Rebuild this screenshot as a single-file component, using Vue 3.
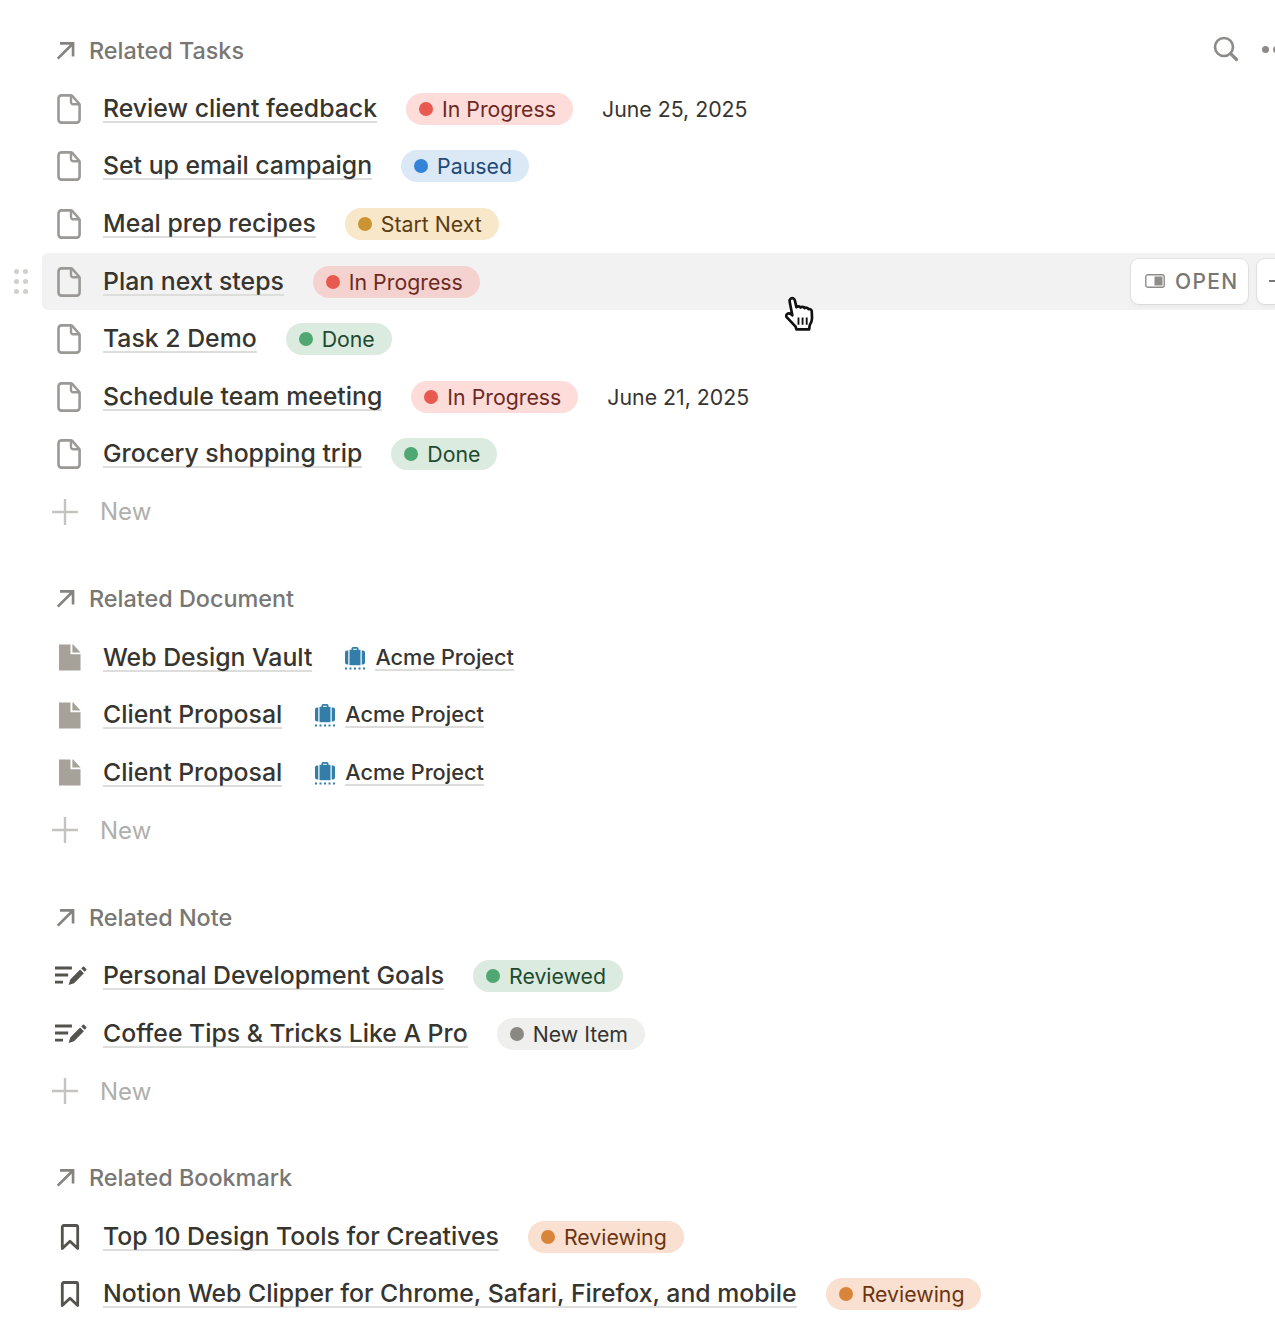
<script setup>
const sections = [
  { title: 'Related Tasks', tools: true, hasNew: true, rows: [
    { icon: 'page', name: 'Review client feedback', pill: ['In Progress', 'red'], date: 'June 25, 2025' },
    { icon: 'page', name: 'Set up email campaign', pill: ['Paused', 'blue'] },
    { icon: 'page', name: 'Meal prep recipes', pill: ['Start Next', 'yellow'] },
    { icon: 'page', name: 'Plan next steps', pill: ['In Progress', 'red'], hover: true },
    { icon: 'page', name: 'Task 2 Demo', pill: ['Done', 'green'] },
    { icon: 'page', name: 'Schedule team meeting', pill: ['In Progress', 'red'], date: 'June 21, 2025' },
    { icon: 'page', name: 'Grocery shopping trip', pill: ['Done', 'green'] },
  ] },
  { title: 'Related Document', hasNew: true, rows: [
    { icon: 'doc', name: 'Web Design Vault', project: 'Acme Project' },
    { icon: 'doc', name: 'Client Proposal', project: 'Acme Project' },
    { icon: 'doc', name: 'Client Proposal', project: 'Acme Project' },
  ] },
  { title: 'Related Note', hasNew: true, rows: [
    { icon: 'note', name: 'Personal Development Goals', pill: ['Reviewed', 'green'] },
    { icon: 'note', name: 'Coffee Tips & Tricks Like A Pro', pill: ['New Item', 'gray'] },
  ] },
  { title: 'Related Bookmark', rows: [
    { icon: 'mark', name: 'Top 10 Design Tools for Creatives', pill: ['Reviewing', 'orange'] },
    { icon: 'mark', name: 'Notion Web Clipper for Chrome, Safari, Firefox, and mobile', pill: ['Reviewing', 'orange'] },
  ] },
]
</script>

<template>
  <div class="page">
    <section v-for="s in sections" :key="s.title" class="section">
      <header class="head">
        <svg class="arrow" viewBox="0 0 20 20" width="21" height="21">
          <path d="M2.600 17.800 16.400 4M4.800 3.200H17.200V15.600" fill="none" stroke="#85837f" stroke-width="2.500" />
        </svg>
        <span class="head-title">{{ s.title }}</span>
        <div v-if="s.tools" class="tools">
          <svg viewBox="0 0 26 26" width="26" height="26">
            <circle cx="11" cy="11" r="9" fill="none" stroke="#8c8b88" stroke-width="2.600" />
            <path d="M17.600 17.600 23.500 23.500" stroke="#8c8b88" stroke-width="3.200" stroke-linecap="round" />
          </svg>
          <div class="dots"><i></i><i></i><i></i></div>
        </div>
      </header>

      <div v-for="(r, i) in s.rows" :key="i" class="row" :class="{ hover: r.hover }">
        <div v-if="r.hover" class="grip"><i v-for="n in 6" :key="n"></i></div>
        <div class="icon">
          <svg v-if="r.icon === 'page'" viewBox="0 0 24 30" width="24" height="30">
            <path d="M4.500 1.400h9.200a2 2 0 0 1 1.500.6l6.800 7.500a2.300 2.300 0 0 1 .6 1.500v14.600a3 3 0 0 1-3 3H4.500a3 3 0 0 1-3-3V4.400a3 3 0 0 1 3-3Z" fill="none" stroke="#9a9996" stroke-width="2.600" />
            <path d="M14 1.800V8a2.200 2.200 0 0 0 2.200 2.200h6" fill="none" stroke="#9a9996" stroke-width="2.400" />
          </svg>
          <svg v-else-if="r.icon === 'doc'" class="doc" viewBox="0 0 23 27" width="22" height="27">
            <path d="M0 0h12v10h10.500v17H0Z" fill="#a6a299" />
            <path d="M14 0h.8l7.700 8.300H14Z" fill="#a6a299" />
          </svg>
          <svg v-else-if="r.icon === 'note'" viewBox="0 0 34 22" width="32" height="21" class="note">
            <path d="M0 1.500h18v3H0ZM0 9h14v3H0ZM0 16.500h8.500v3H0Z" fill="#55534e" />
            <path d="M14.500 21l1.700-5.800L26.700 4.700l4 4-10.500 10.500ZM27.900 3.500l1.700-1.700a1 1 0 0 1 1.400 0l2.200 2.200a1 1 0 0 1 0 1.400l-1.700 1.700Z" fill="#55534e" />
          </svg>
          <svg v-else viewBox="0 0 20 26" width="20" height="26" class="mark">
            <path d="M3.800 1.500h12.400a1.500 1.500 0 0 1 1.500 1.500v21.500L10 17.200 2.300 24.500V3a1.500 1.500 0 0 1 1.500-1.500Z" fill="none" stroke="#55534e" stroke-width="2.800" stroke-linejoin="round" />
          </svg>
        </div>
        <span class="name">{{ r.name }}</span>
        <span v-if="r.pill" class="pill" :class="r.pill[1]"><i></i>{{ r.pill[0] }}</span>
        <span v-if="r.date" class="date">{{ r.date }}</span>
        <span v-if="r.project" class="project">
          <svg viewBox="0 0 22 24" width="22" height="24">
            <path d="M7.500 4V2.600A1.600 1.600 0 0 1 9.100 1h3.800a1.600 1.600 0 0 1 1.600 1.600V4h-1.700V2.800H9.200V4Z" fill="#337ea9" />
            <path d="M5.500 3.800h11v15.400h-11Z" fill="#337ea9" />
            <path d="M4.300 4.600v13.800H3A2 2 0 0 1 1 16.400V6.600a2 2 0 0 1 2-2ZM17.700 4.600H19a2 2 0 0 1 2 2v9.800a2 2 0 0 1-2 2h-1.300Z" fill="#337ea9" />
            <path d="M1 22.500h20" stroke="#337ea9" stroke-width="2" stroke-dasharray="2 2.500" />
          </svg>
          <span class="project-name">{{ r.project }}</span>
        </span>
        <div v-if="r.hover" class="actions">
          <div class="btn open">
            <svg viewBox="0 0 20 14" width="20" height="14">
              <rect x=".8" y=".8" width="18.400" height="12.400" rx="2" fill="none" stroke="#8e8d8a" stroke-width="1.400" />
              <rect x="9.500" y="2.500" width="8" height="9" fill="#8e8d8a" />
            </svg>
            OPEN
          </div>
          <div class="btn more">
            <svg viewBox="0 0 14 14" width="14" height="14"><path d="M0 7h14M7 0v14" stroke="#777" stroke-width="2" /></svg>
          </div>
        </div>
      </div>

      <div v-if="s.hasNew" class="new">
        <svg viewBox="0 0 26 26" width="26" height="26">
          <path d="M0 13h26M13 0v26" stroke="#c4c3c0" stroke-width="2.400" />
        </svg>
        <span>New</span>
      </div>
    </section>

    <svg class="cursor" viewBox="0 0 32 36" width="33" height="37">
      <path d="M7.500 2.500c1.800-1.200 3.600 0 4 1.800l1.500 6.500c1.500-1.200 3-1 4 .4 1.400-1 3-.8 3.900.6 1.400-.8 3-.4 3.800 1 1.500-.5 3 .3 3.200 2l.3 6.700c0 3-.8 5-2.300 7l-.5 4H13l-.8-2.700-8-8.600C2.800 20.300 2.700 18.500 4 17.500c1-.8 2.500-.7 3.800.3L9 18.800 6.500 5.800c-.3-1.300 0-2.500 1-3.300Z" fill="#fff" stroke="#111" stroke-width="2.600" stroke-linejoin="round" />
      <path d="M15 21v7M19 21v7M23 21v7" stroke="#111" stroke-width="1.800" />
    </svg>
  </div>
</template>

<style>
html, body { margin: 0; background: #fff; }
</style>

<style scoped>
.page {
  position: relative;
  width: 1275px;
  height: 1334px;
  overflow: hidden;
  padding-top: 20px;
  box-sizing: border-box;
  font-family: Inter, "Liberation Sans", sans-serif;
  background: #fff;
}
.section { margin-bottom: 28px; }
.head {
  height: 60px;
  display: flex;
  align-items: center;
  padding-left: 55px;
  gap: 13px;
  position: relative;
  color: #787774;
  font-size: 23.400px;
  font-weight: 500;
}
.arrow { flex: none; }
.tools {
  position: absolute;
  left: 1213px;
  top: 16px;
  display: flex;
  align-items: center;
  gap: 23px;
}
.dots { display: flex; gap: 4px; }
.dots i { width: 7px; height: 7px; border-radius: 50%; background: #8c8b88; flex: none; }
.row {
  height: 57.600px;
  display: flex;
  align-items: center;
  margin-left: 42px;
  border-radius: 6px 0 0 6px;
  position: relative;
}
.row.hover { background: #f2f2f2; }
.icon {
  width: 61px;
  flex: none;
  display: flex;
  padding-left: 15px;
  box-sizing: border-box;
}
.icon .doc { margin-left: 2px; }
.icon .note { margin-left: -2px; }
.icon .mark { margin-left: 3px; }
.name {
  font-size: 24.800px;
  font-weight: 500;
  color: #37352f;
  line-height: 26px;
  border-bottom: 2px solid #dddddb;
  margin-right: 29px;
  white-space: nowrap;
}
.pill {
  height: 32px;
  border-radius: 16px;
  display: flex;
  align-items: center;
  padding: 0 17px 0 13px;
  gap: 9px;
  font-size: 21.300px;
  white-space: nowrap;
}
.pill i { width: 14px; height: 14px; border-radius: 50%; flex: none; }
.pill.red { background: rgba(250, 120, 110, 0.26); color: #6b2a24; }
.pill.red i { background: #e8594f; }
.pill.blue { background: #dbe8f6; color: #1f4a77; }
.pill.blue i { background: #3383d6; }
.pill.yellow { background: #f8e7c8; color: #5a3c10; }
.pill.yellow i { background: #cb9433; }
.pill.green { background: #dbebdf; color: #1f4a30; }
.pill.green i { background: #4fa772; }
.pill.gray { background: #efefed; color: #37352f; }
.pill.gray i { background: #8a8883; }
.pill.orange { background: #fae0d0; color: #6b3410; }
.pill.orange i { background: #d9843b; }
.date {
  margin-left: 29px;
  font-size: 21.300px;
  color: #37352f;
}
.project { display: flex; align-items: center; gap: 9px; margin-left: 3px; }
.project-name {
  font-size: 21.700px;
  font-weight: 500;
  color: #37352f;
  line-height: 24px;
  border-bottom: 2px solid #dddddb;
}
.grip {
  position: absolute;
  left: -28px;
  top: 16px;
  display: grid;
  grid-template-columns: 5px 5px;
  gap: 5px 4px;
}
.grip i { width: 5px; height: 5px; border-radius: 50%; background: #d0cfcc; }
.actions {
  position: absolute;
  left: 1089px;
  top: 6px;
  display: flex;
  gap: 9px;
}
.btn {
  height: 45px;
  background: #fff;
  border-radius: 8px;
  box-shadow: 0 0 0 1px rgba(15, 15, 15, 0.06), 0 2px 4px rgba(15, 15, 15, 0.05);
  display: flex;
  align-items: center;
  box-sizing: border-box;
  flex: none;
}
.open {
  width: 117px;
  padding-left: 14px;
  gap: 10px;
  font-size: 21px;
  font-weight: 500;
  letter-spacing: 1.300px;
  color: #787774;
}
.more { width: 40px; padding-left: 12px; }
.new {
  height: 57.600px;
  display: flex;
  align-items: center;
  padding-left: 52px;
  gap: 22px;
  font-size: 24px;
  color: #b0afab;
}
.cursor {
  position: absolute;
  left: 783px;
  top: 296px;
}
</style>
